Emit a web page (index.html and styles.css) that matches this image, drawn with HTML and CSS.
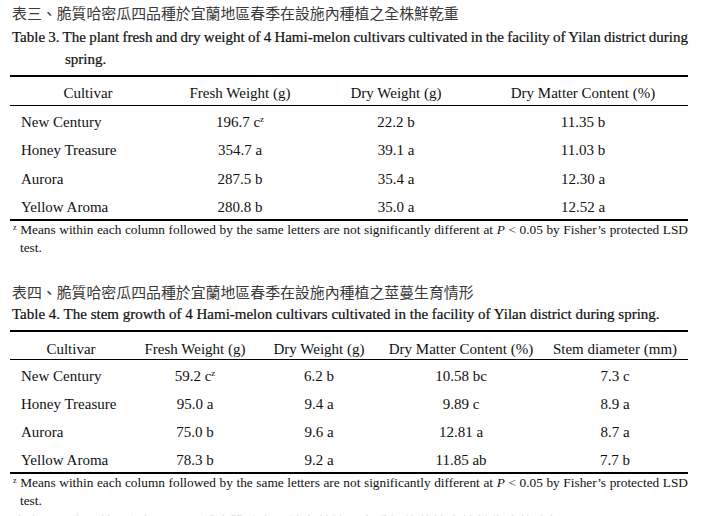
FILE: index.html
```html
<!DOCTYPE html>
<html lang="zh-Hant">
<head>
<meta charset="utf-8">
<title>Tables</title>
<link rel="stylesheet" href="styles.css">
</head>
<body>
<div class="page">
  <section class="block">
    <p class="title-zh">表三、脆質哈密瓜四品種於宜蘭地區春季在設施內種植之全株鮮乾重</p>
    <p class="caption caption-tight">Table 3. The plant fresh and dry weight of 4 Hami-melon cultivars cultivated in the facility of Yilan district during spring.</p>
    <table class="data t3">
      <colgroup>
        <col class="w156"><col class="w148"><col class="w164"><col class="w210">
      </colgroup>
      <thead>
        <tr><th>Cultivar</th><th>Fresh Weight (g)</th><th>Dry Weight (g)</th><th>Dry Matter Content (%)</th></tr>
      </thead>
      <tbody>
        <tr><td class="name">New Century</td><td>196.7 c<sup>z</sup></td><td>22.2 b</td><td>11.35 b</td></tr>
        <tr><td class="name">Honey Treasure</td><td>354.7 a</td><td>39.1 a</td><td>11.03 b</td></tr>
        <tr><td class="name">Aurora</td><td>287.5 b</td><td>35.4 a</td><td>12.30 a</td></tr>
        <tr><td class="name">Yellow Aroma</td><td>280.8 b</td><td>35.0 a</td><td>12.52 a</td></tr>
      </tbody>
    </table>
    <p class="note"><sup>z</sup> Means within each column followed by the same letters are not significantly different at <i>P</i> &lt; 0.05 by Fisher’s protected LSD test.</p>
  </section>

  <section class="block block2">
    <p class="title-zh">表四、脆質哈密瓜四品種於宜蘭地區春季在設施內種植之莖蔓生育情形</p>
    <p class="caption">Table 4. The stem growth of 4 Hami-melon cultivars cultivated in the facility of Yilan district during spring.</p>
    <table class="data t4">
      <colgroup>
        <col class="w122"><col class="w126"><col class="w122"><col class="w162"><col class="w146">
      </colgroup>
      <thead>
        <tr><th>Cultivar</th><th>Fresh Weight (g)</th><th>Dry Weight (g)</th><th>Dry Matter Content (%)</th><th>Stem diameter (mm)</th></tr>
      </thead>
      <tbody>
        <tr><td class="name">New Century</td><td>59.2 c<sup>z</sup></td><td>6.2 b</td><td>10.58 bc</td><td>7.3 c</td></tr>
        <tr><td class="name">Honey Treasure</td><td>95.0 a</td><td>9.4 a</td><td>9.89 c</td><td>8.9 a</td></tr>
        <tr><td class="name">Aurora</td><td>75.0 b</td><td>9.6 a</td><td>12.81 a</td><td>8.7 a</td></tr>
        <tr><td class="name">Yellow Aroma</td><td>78.3 b</td><td>9.2 a</td><td>11.85 ab</td><td>7.7 b</td></tr>
      </tbody>
    </table>
    <p class="note"><sup>z</sup> Means within each column followed by the same letters are not significantly different at <i>P</i> &lt; 0.05 by Fisher’s protected LSD test.</p>
  </section>

  <p class="body-zh">由表三及表四結果得知，四品種脆質哈密瓜於宜蘭地區春季設施栽培之植株生育皆良好。</p>
</div>
</body>
</html>
```

FILE: styles.css
```css
html, body {
  margin: 0;
  padding: 0;
  background: #ffffff;
}

body {
  font-family: "Liberation Serif", "Times New Roman", "Noto Sans CJK TC", serif;
  color: #111111;
  overflow: hidden;
}

.page {
  width: 678px;
  padding: 2px 0 0 10px;
}

p {
  margin: 0;
}

.title-zh {
  font-family: "Noto Sans CJK TC", "Noto Sans CJK SC", sans-serif;
  font-size: 14.9px;
  line-height: 22px;
  padding-left: 2px;
  color: #3a3a3a;
  white-space: nowrap;
}

.caption {
  font-size: 15px;
  line-height: 22px;
  margin-top: 2px;
  padding-left: 55px;
  text-indent: -53px;
  -webkit-text-stroke: 0.22px #111111;
  text-align: justify;
}

.caption-tight {
  word-spacing: -1px;
}

.data {
  border-collapse: separate;
  border-spacing: 0;
  width: 678px;
  table-layout: fixed;
  margin-top: 5px;
  border-top: 2px solid #000000;
  border-bottom: 2px solid #000000;
  font-size: 15px;
}

.w156 { width: 156px; }
.w148 { width: 148px; }
.w164 { width: 164px; }
.w210 { width: 210px; }
.w122 { width: 122px; }
.w126 { width: 126px; }
.w162 { width: 162px; }
.w146 { width: 146px; }

.data th,
.data td {
  padding: 0;
  vertical-align: top;
  white-space: nowrap;
}

.data th {
  font-weight: normal;
  text-align: center;
  border-bottom: 1px solid #000000;
}

.t3 th { padding-top: 4px; line-height: 24px; }
.t4 th { padding-top: 7px; line-height: 20px; }

.data td {
  text-align: center;
}

.t3 td { padding-top: 4px; line-height: 24.25px; }
.t4 td { padding-top: 5px; line-height: 23px; }

.data td.name {
  text-align: left;
  padding-left: 11px;
}

.data sup {
  font-size: 9px;
  vertical-align: 5px;
  line-height: 0;
}

.note {
  font-size: 13.33px;
  line-height: 18px;
  padding-left: 10px;
  text-indent: -7px;
  text-align: justify;
}

.note sup {
  font-size: 8px;
  vertical-align: 4px;
  line-height: 0;
}

.block2 {
  margin-top: 24px;
}

.block2 .caption {
  margin-top: 0;
}

.body-zh {
  font-family: "Noto Sans CJK TC", "Noto Sans CJK SC", sans-serif;
  font-size: 14.5px;
  line-height: 22px;
  padding-left: 2px;
  margin-top: 1px;
  color: #d4d4d4;
  white-space: nowrap;
}
```
